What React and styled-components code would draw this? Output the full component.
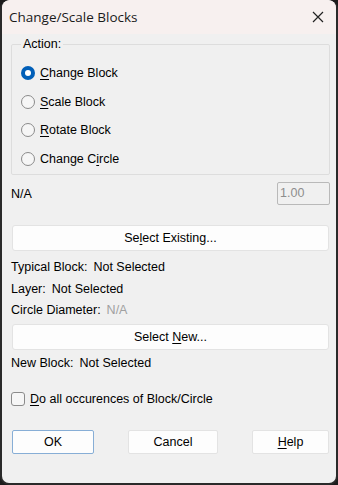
import styled, { createGlobalStyle } from "styled-components"

const Global = createGlobalStyle`
  html, body { margin: 0; padding: 0; background: #1c1c1c; }
  body { font-family: "Liberation Sans", Arial, sans-serif; }
`

const Frame = styled.div`
  width: 338px;
  height: 485px;
  box-sizing: border-box;
  padding: 0 2px 2px 2px;
  background: #2a2a2a;
  border-radius: 9px;
  overflow: hidden;
`

const Dialog = styled.div`
  height: 100%;
  background: #f0f0f0;
  border-radius: 8px 8px 7px 7px;
  overflow: hidden;
  display: flex;
  flex-direction: column;
`

const TitleBar = styled.div`
  height: 34px;
  flex: none;
  background: #f7f0ef;
  display: flex;
  align-items: center;
  justify-content: space-between;
  padding: 0 12px 0 7px;
  font-family: "Open Sans", "Noto Sans", sans-serif;
  font-size: 13.5px;
  color: #1a1a1a;
`

const Body = styled.div`
  padding: 3px 6px 0 9px;
  font-size: 12.5px;
  color: #000;
`

const Group = styled.fieldset`
  margin: 0;
  padding: 13px 0 6px 9px;
  border: 1px solid #dddddd;
  border-radius: 2px;
  display: flex;
  flex-direction: column;
  gap: 10px;
  legend {
    padding: 0 2px;
    margin-left: 0;
    font-size: 12.5px;
  }
`

const Option = styled.label`
  display: flex;
  align-items: center;
  gap: 5px;
  height: 18.5px;
`

const Radio = styled.span`
  width: 14px;
  height: 14px;
  box-sizing: border-box;
  border-radius: 50%;
  flex: none;
  display: flex;
  align-items: center;
  justify-content: center;
  background: ${p => (p.$on ? "#005fb8" : "#f6f6f6")};
  border: ${p => (p.$on ? "none" : "1px solid #8b8b8b")};
  &::after {
    content: "";
    display: ${p => (p.$on ? "block" : "none")};
    width: 6px;
    height: 6px;
    border-radius: 50%;
    background: #fff;
  }
`

const Key = styled.span`
  text-decoration: underline;
  text-underline-offset: 2px;
`

const ValueRow = styled.div`
  display: flex;
  align-items: center;
  justify-content: space-between;
  margin-top: 7px;
`

const NumBox = styled.div`
  width: 53px;
  height: 23px;
  box-sizing: border-box;
  border: 1px solid #b9b9b9;
  border-radius: 2px;
  color: #8d8d8d;
  font-size: 12.5px;
  line-height: 21px;
  padding-left: 2px;
`

const WideButton = styled.div`
  height: 24px;
  margin: ${p => p.$mt || 0}px 1px 0 1px;
  background: #fdfdfd;
  border: 1px solid #e3e3e3;
  border-radius: 3px;
  display: flex;
  align-items: center;
  justify-content: center;
`

const Info = styled.div`
  margin-top: ${p => p.$mt || 0}px;
  height: 15px;
  line-height: 15px;
  span + span { margin-left: 6px; }
`

const Dim = styled.span`
  color: #a0a0a0;
`

const CheckRow = styled.label`
  display: flex;
  align-items: center;
  gap: 5px;
  margin-top: 21px;
`

const Check = styled.span`
  width: 14px;
  height: 14px;
  box-sizing: border-box;
  border: 1px solid #8b8b8b;
  border-radius: 3px;
  background: #f6f6f6;
`

const Buttons = styled.div`
  display: flex;
  justify-content: space-between;
  margin-top: 24px;
  padding: 0 1px 0 1px;
`

const Button = styled.div`
  width: ${p => p.$w}px;
  height: 24px;
  box-sizing: border-box;
  background: #fdfdfd;
  border: 1px solid ${p => (p.$default ? "#87aed6" : "#e3e3e3")};
  border-radius: 2px;
  display: flex;
  align-items: center;
  justify-content: center;
`

const Close = () => (
  <svg width="12" height="12" viewBox="0 0 12 12">
    <path d="M1 1 L11 11 M11 1 L1 11" stroke="#222" strokeWidth="1.2" />
  </svg>
)

export default function App() {
  return (
    <>
      <Global />
      <Frame>
        <Dialog>
          <TitleBar>
            <span>Change/Scale Blocks</span>
            <Close />
          </TitleBar>
          <Body>
            <Group>
              <legend>Action:</legend>
              <Option><Radio $on /><span><Key>C</Key>hange Block</span></Option>
              <Option><Radio /><span><Key>S</Key>cale Block</span></Option>
              <Option><Radio /><span><Key>R</Key>otate Block</span></Option>
              <Option><Radio /><span>Change C<Key>i</Key>rcle</span></Option>
            </Group>
            <ValueRow>
              <span>N/A</span>
              <NumBox>1.00</NumBox>
            </ValueRow>
            <WideButton $mt={20}><span>Se<Key>l</Key>ect Existing...</span></WideButton>
            <Info $mt={9}><span>Typical Block:</span><span>Not Selected</span></Info>
            <Info $mt={7}><span>Layer:</span><span>Not Selected</span></Info>
            <Info $mt={6}><span>Circle Diameter:</span><Dim>N/A</Dim></Info>
            <WideButton $mt={6}><span>Select <Key>N</Key>ew...</span></WideButton>
            <Info $mt={6}><span>New Block:</span><span>Not Selected</span></Info>
            <CheckRow><Check /><span><Key>D</Key>o all occurences of Block/Circle</span></CheckRow>
            <Buttons>
              <Button $w={82} $default>OK</Button>
              <Button $w={90}>Cancel</Button>
              <Button $w={77}><span><Key>H</Key>elp</span></Button>
            </Buttons>
          </Body>
        </Dialog>
      </Frame>
    </>
  )
}
